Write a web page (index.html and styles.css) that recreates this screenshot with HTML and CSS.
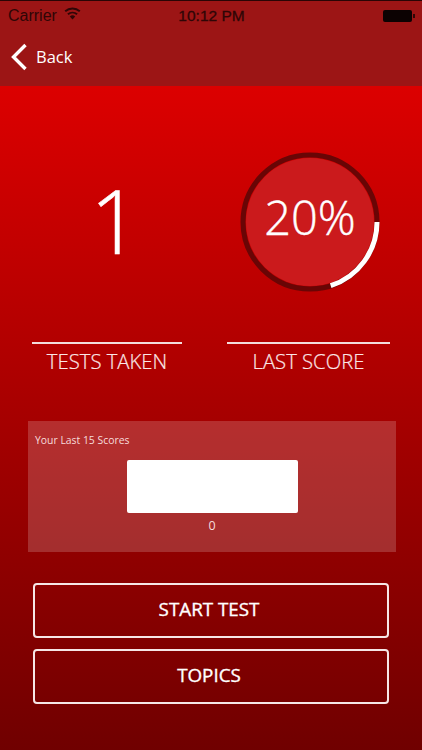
FILE: index.html
```html
<!DOCTYPE html>
<html lang="en">
<head>
  <meta charset="UTF-8" />
  <meta name="viewport" content="width=device-width, initial-scale=1.0"/>
  <title>Test Stats</title>
  <link rel="stylesheet" href="styles.css">
</head>
<body>
  <div class="header">
    <div class="status-bar">
      <div class="carrier">
        Carrier
        <svg class="wifi" width="17" height="13" viewBox="0 0 17 13">
          <path d="M8.5 12.5 5.8 9.4a4 4 0 0 1 5.4 0z" fill="#2e0606"/>
          <path d="M3.9 7.3a7 7 0 0 1 9.2 0M1.2 4.3a11 11 0 0 1 14.6 0" fill="none" stroke="#2e0606" stroke-width="1.9"/>
        </svg>
      </div>
      <div class="time">10:12 PM</div>
      <div class="status-right">
        <div class="battery"><span class="battery-cap"></span></div>
      </div>
    </div>
    <div class="nav">
      <svg class="back-icon" width="18" height="28" viewBox="0 0 18 28">
        <path d="M15.5 2 3.5 14l12 12" fill="none" stroke="#fff" stroke-width="3.4"/>
      </svg>
      <span class="back-label">Back</span>
    </div>
  </div>

  <div class="content">
    <div class="stats">
      <div class="stat stat-left">
        <div class="stat-value">
          <div class="big-number">1</div>
        </div>
        <div class="stat-label">TESTS TAKEN</div>
      </div>
      <div class="stat stat-right">
        <div class="stat-value">
          <div class="score">
            <svg class="score-ring" width="142" height="142" viewBox="0 0 142 142">
              <circle cx="71" cy="71" r="64" fill="#cb1a1c"/>
              <circle cx="71" cy="71" r="67" fill="none" stroke="#690505" stroke-width="5"/>
              <path d="M138 71A67 67 0 0 1 91.7 134.7" fill="none" stroke="#fff" stroke-width="5"/>
            </svg>
            <span class="score-text">20%</span>
          </div>
        </div>
        <div class="stat-label">LAST SCORE</div>
      </div>
    </div>

    <div class="scores-panel">
      <div class="scores-title">Your Last 15 Scores</div>
      <div class="bar"></div>
      <div class="bar-label">0</div>
    </div>

    <div class="buttons">
      <button type="button" class="btn">START TEST</button>
      <button type="button" class="btn">TOPICS</button>
    </div>
  </div>
</body>
</html>
```

FILE: styles.css
```css
* {
  box-sizing: border-box;
}

html, body {
  height: 100%;
}

body {
  margin: 0;
  width: 422px;
  height: 750px;
  overflow: hidden;
  font-family: 'Open Sans', sans-serif;
  color: #fff;
  display: flex;
  flex-direction: column;
  background: #700000;
}

.header {
  height: 86px;
  background: #9c1515;
  border-top: 1px solid #2a0505;
  flex-shrink: 0;
}

.status-bar {
  height: 28px;
  padding: 1px 7px 0 8px;
  display: flex;
  align-items: center;
  font-family: 'Liberation Sans', sans-serif;
  font-size: 16px;
  color: #2e0606;
}

.carrier {
  flex: 1;
  display: flex;
  align-items: center;
  gap: 7px;
}

.wifi {
  margin-top: -4px;
}

.time {
  font-size: 15.5px;
  -webkit-text-stroke: 0.3px #2e0606;
}

.status-right {
  flex: 1;
  display: flex;
  justify-content: flex-end;
}

.battery {
  position: relative;
  width: 29px;
  height: 12px;
  margin-right: 3px;
  background: #0c0202;
  border-radius: 2px;
}

.battery-cap {
  position: absolute;
  right: -3px;
  top: 4px;
  width: 2px;
  height: 4px;
  background: #2e0606;
}

.nav {
  display: flex;
  align-items: center;
  gap: 8px;
  padding: 1px 0 0 10px;
  height: 54px;
}

.back-label {
  font-size: 16.5px;
}

.content {
  flex: 1;
  background: linear-gradient(180deg, #dc0000, #700000);
}

.stats {
  display: flex;
  padding: 65px 32px 0;
  justify-content: space-between;
}

.stat-left {
  width: 150px;
}

.stat-right {
  width: 163px;
}

.stat-value {
  height: 193px;
  display: flex;
  justify-content: center;
  border-bottom: 2px solid #f3dcdc;
}

.big-number {
  margin-left: 16px;
  font-size: 88px;
  font-weight: 300;
  line-height: 139px;
  -webkit-text-stroke: 0.5px #fff;
}

.score {
  position: relative;
  width: 142px;
  height: 142px;
  margin-left: 3px;
}

.score-ring {
  display: block;
}

.score-text {
  position: absolute;
  inset: 0;
  padding-bottom: 10px;
  display: flex;
  align-items: center;
  justify-content: center;
  font-size: 47px;
  font-weight: 300;
  -webkit-text-stroke: 0.4px #fff;
}

.stat-label {
  margin-top: 3px;
  text-align: center;
  font-size: 20.3px;
  font-weight: 300;
  white-space: nowrap;
  color: #fbe6e6;
  -webkit-text-stroke: 0.2px #fbe6e6;
}

.scores-panel {
  margin: 46px 26px 0 28px;
  height: 131px;
  padding: 12px 7px 0;
  background: rgba(255, 255, 255, 0.18);
  display: flex;
  flex-direction: column;
}

.scores-title {
  font-size: 10.4px;
  line-height: 15px;
  color: #f6dcdc;
}

.bar {
  width: 171px;
  height: 53px;
  margin: 12px 0 0 92px;
  background: #fff;
  border-radius: 2px;
}

.bar-label {
  margin-top: 5px;
  text-align: center;
  font-size: 12.5px;
  line-height: 15px;
  color: #f6dcdc;
}

.buttons {
  display: flex;
  flex-direction: column;
  gap: 11px;
  margin: 31px 33px 0;
}

.btn {
  height: 55px;
  padding: 0 4px 4px 0;
  background: transparent;
  border: 2px solid #f6e6e6;
  border-radius: 4px;
  color: #fff;
  font-family: 'Open Sans', sans-serif;
  font-size: 18.8px;
  font-weight: 400;
  -webkit-text-stroke: 0.35px #fff;
}
```
